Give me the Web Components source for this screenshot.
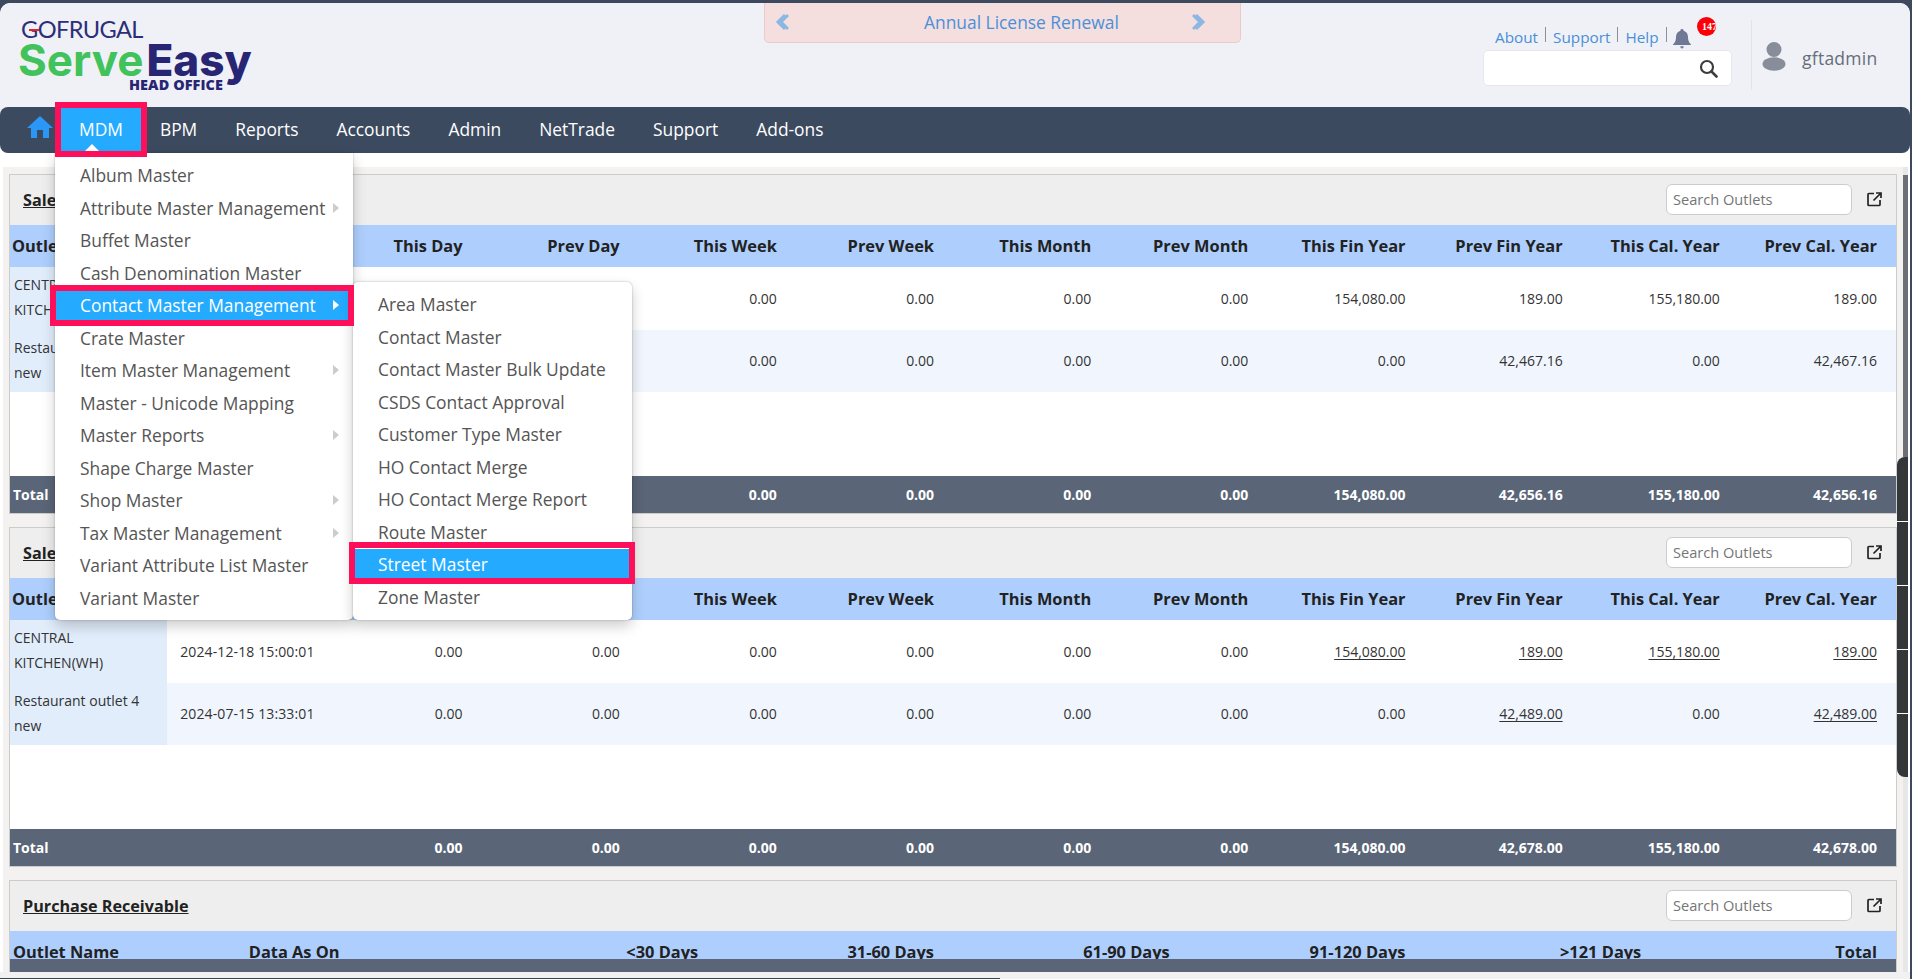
<!DOCTYPE html>
<html>
<head>
<meta charset="utf-8">
<title>ServeEasy Head Office</title>
<style>
  html, body { margin: 0; height: 100%; overflow: hidden; }
  body { background: #3d4a5e; font-family: "Open Sans", "Liberation Sans", sans-serif; }
</style>
</head>
<body>
<app-shell></app-shell>

<script>
const DASHBOARD = {
  sales1: {
    cols: 12,
    head: ["Outlet Name", "Data As On", "This Day", "Prev Day", "This Week", "Prev Week", "This Month", "Prev Month", "This Fin Year", "Prev Fin Year", "This Cal. Year", "Prev Cal. Year"],
    rows: [
      ["CENTRAL KITCHEN(WH)", "", "0.00", "0.00", "0.00", "0.00", "0.00", "0.00", "154,080.00", "189.00", "155,180.00", "189.00"],
      ["Restaurant outlet 4 new", "", "0.00", "0.00", "0.00", "0.00", "0.00", "0.00", "0.00", "42,467.16", "0.00", "42,467.16"]
    ],
    total: ["Total", "", "0.00", "0.00", "0.00", "0.00", "0.00", "0.00", "154,080.00", "42,656.16", "155,180.00", "42,656.16"]
  },
  sales2: {
    cols: 12,
    links: true,
    head: ["Outlet Name", "Data As On", "This Day", "Prev Day", "This Week", "Prev Week", "This Month", "Prev Month", "This Fin Year", "Prev Fin Year", "This Cal. Year", "Prev Cal. Year"],
    rows: [
      ["CENTRAL KITCHEN(WH)", "2024-12-18 15:00:01", "0.00", "0.00", "0.00", "0.00", "0.00", "0.00", "154,080.00", "189.00", "155,180.00", "189.00"],
      ["Restaurant outlet 4 new", "2024-07-15 13:33:01", "0.00", "0.00", "0.00", "0.00", "0.00", "0.00", "0.00", "42,489.00", "0.00", "42,489.00"]
    ],
    total: ["Total", "", "0.00", "0.00", "0.00", "0.00", "0.00", "0.00", "154,080.00", "42,678.00", "155,180.00", "42,678.00"]
  },
  receivable: {
    cols: 8,
    clipped: true,
    head: ["Outlet Name", "Data As On", "<30 Days", "31-60 Days", "61-90 Days", "91-120 Days", ">121 Days", "Total"],
    rows: [],
    total: ["Total", "", "0.00", "0.00", "0.00", "0.00", "0.00", "0.00"]
  }
};

const MDM_ITEMS = [
  ["Album Master"], ["Attribute Master Management", 1], ["Buffet Master"], ["Cash Denomination Master"],
  ["Contact Master Management", 1, 1], ["Crate Master"], ["Item Master Management", 1], ["Master - Unicode Mapping"],
  ["Master Reports", 1], ["Shape Charge Master"], ["Shop Master", 1], ["Tax Master Management", 1],
  ["Variant Attribute List Master"], ["Variant Master"]
];
const CONTACT_ITEMS = [
  ["Area Master"], ["Contact Master"], ["Contact Master Bulk Update"], ["CSDS Contact Approval"],
  ["Customer Type Master"], ["HO Contact Merge"], ["HO Contact Merge Report"], ["Route Master"],
  ["Street Master", 0, 1], ["Zone Master"]
];

class BrandLogo extends HTMLElement {
  constructor() {
    super();
    this.attachShadow({mode: "open"}).innerHTML = `
      <style>
        :host { display: block; width: 260px; color: #272574; }
        .go { font: 400 23.6px/20px Lato, sans-serif; letter-spacing: -.6px; color: #2c2f78; padding-left: 3px; position: relative; }
        .go i { position: absolute; left: 11px; top: 10px; width: 10px; height: 2px; background: #e8202c; }
        .name { display: flex; font: 800 44px/50px Inter, "Open Sans", sans-serif; margin-top: -4px; }
        .serve { color: #42c25a; font-weight: 700; }
        .easy { color: #272574; margin-left: 3px; }
        .ho { font: 800 14.4px/14px "Open Sans", sans-serif; letter-spacing: .1px; margin: -7px 0 0 111px; }
      </style>
      <div class="go"><i></i>GOFRUGAL</div>
      <div class="name"><span class="serve">Serve</span><span class="easy">Easy</span></div>
      <div class="ho">HEAD OFFICE</div>`;
  }
}

class AppHeader extends HTMLElement {
  constructor() {
    super();
    this.attachShadow({mode: "open"}).innerHTML = `
      <style>
        :host { display: grid; grid-template-columns: 746px 477px 1fr; height: 104px; box-sizing: border-box;
                padding: 0 0 0 18px; background: #f0f1f7; border-radius: 10px 10px 0 0; }
        brand-logo { margin-top: 16px; }
        .banner { height: 40px; box-sizing: border-box; background: #f4dede; border: 1px solid #eccaca; border-top: 0;
                  border-radius: 0 0 5px 5px; display: flex; align-items: center;
                  padding: 0 0 2px 10px; color: #4a90d9; font-size: 17.4px; white-space: nowrap; }
        .banner span { margin: 0 73px 0 135px; }
        .right { display: flex; justify-content: flex-end; padding: 14px 0 0; }
        .tools { display: flex; flex-direction: column; align-items: flex-start; width: 249px; }
        .links { height: 33px; box-sizing: border-box; padding: 0 0 3px 12px; display: flex; align-items: flex-end; font-size: 15.3px; color: #4a8fd6; position: relative; line-height: 20px; }
        .links i { display: block; width: 1px; height: 15px; background: #8a8f99; margin: 0 7px 5px; }
        .links svg { margin: 0 0 -2px -1px; }
        .badge { position: absolute; left: 214px; top: 0; width: 19px; height: 19px; border-radius: 50%; background: #fb0007; color: #fff;
                 font: 700 10px/19px "Liberation Serif", serif; overflow: hidden; white-space: nowrap; padding-left: 5px; box-sizing: border-box; }
        .search { box-sizing: border-box; width: 249px; height: 36px; background: #fff; border: 1px solid #e6e7ee; border-radius: 5px;
                  display: flex; align-items: center; justify-content: flex-end; padding-right: 13px; }
        .user { display: flex; align-items: flex-start; margin-left: 19px; width: 158px; height: 70px; border-left: 1px solid #e3e4ea; margin-top: 3px; }
        .user svg { margin: 22px 0 0 10px; }
        .user span { font-size: 17.5px; color: #666d7a; margin: 26px 0 0 16px; line-height: 24px; letter-spacing: .25px; }
      </style>
      <brand-logo></brand-logo>
      <div class="banner">
        <svg width="14" height="18" viewBox="0 0 14 18"><path d="M10 2 3 9l7 7M13 2 6 9l7 7" fill="none" stroke="#8ab7e3" stroke-width="3"/></svg>
        <span>Annual License Renewal</span>
        <svg width="14" height="18" viewBox="0 0 14 18"><path d="M1 2l7 7-7 7M4 2l7 7-7 7" fill="none" stroke="#8ab7e3" stroke-width="3"/></svg>
      </div>
      <div class="right">
        <div class="tools">
          <div class="links">
            <span>About</span><i></i><span>Support</span><i></i><span>Help</span><i></i>
            <svg width="18" height="20" viewBox="0 0 18 20"><path d="M9 0c1 0 1.600.7 1.600 1.700C13.500 2.500 15 5 15 8c0 3 .6 5 3 7.500V16H0v-.5C2.400 13 3 11 3 8c0-3 1.500-5.500 4.400-6.300C7.400.7 8 0 9 0zM7.300 17.200h3.400C10.500 18.500 10 19.500 9 19.500s-1.500-1-1.700-2.300z" fill="#6f7894"/></svg>
            <span class="badge">147</span>
          </div>
          <div class="search">
            <svg width="19" height="19" viewBox="0 0 19 19"><circle cx="8" cy="8" r="6" fill="none" stroke="#3d3d3d" stroke-width="2.200"/><path d="M12.500 12.500l5 5" stroke="#3d3d3d" stroke-width="2.600" stroke-linecap="round"/></svg>
          </div>
        </div>
        <div class="user">
          <svg width="24" height="29" viewBox="0 0 24 29"><circle cx="12" cy="7.500" r="7.500" fill="#878d99"/><ellipse cx="12" cy="22" rx="11.500" ry="6.700" fill="#878d99"/></svg>
          <span>gftadmin</span>
        </div>
      </div>`;
  }
}

class NavBar extends HTMLElement {
  constructor() {
    super();
    const items = ["BPM", "Reports", "Accounts", "Admin", "NetTrade", "Support", "Add-ons"];
    this.attachShadow({mode: "open"}).innerHTML = `
      <style>
        :host { display: flex; height: 46px; background: #3c4a5f; border-radius: 8px; color: #fff; font-size: 17.4px; padding-left: 27px; box-sizing: border-box; }
        .home { width: 34px; padding-top: 9px; box-sizing: border-box; }
        a { display: flex; align-items: center; padding: 0 19px 2px; height: 46px; box-sizing: border-box; }
        a.on { background: #24abff; position: relative; padding: 0 18px 1px; height: 43px; margin-top: 1px; }
        a.on::after { content: ""; position: absolute; left: 24px; bottom: 0; border: 7px solid transparent; border-top: 0; border-bottom-color: #fff; }
      </style>
      <div class="home"><svg width="26" height="22" viewBox="0 0 26 22"><path d="M13 0l13 12h-4v10h-6v-8h-6v8H4V12H0z" fill="#2a97f7"/></svg></div>
      <a class="on">MDM</a>
      ${items.map(t => `<a>${t}</a>`).join("")}`;
  }
}

class FlyMenu extends HTMLElement {
  set items(list) {
    this.shadowRoot.querySelector(".list").innerHTML = list.map(([t, sub, on]) =>
      `<div class="item${on ? " on" : ""}"><span>${t}</span>${sub ? `<b></b>` : ""}</div>`).join("");
  }
  constructor() {
    super();
    this.attachShadow({mode: "open"}).innerHTML = `
      <style>
        :host { display: block; position: absolute; box-sizing: border-box; background: #fff; border-radius: 0 0 5px 5px; padding: 7px 0 5px;
                box-shadow: 0 6px 14px rgba(0,0,0,.2), 0 0 2px rgba(0,0,0,.3); font-size: 17.4px; color: #555; z-index: 5; }
        .item { height: 32.5px; display: flex; align-items: center; justify-content: space-between; padding: 0 14px 2px 25px; box-sizing: border-box; white-space: nowrap; }
        .item.on { background: #24abff; color: #fff; }
        b { border: 5px solid transparent; border-left: 6px solid #ccc; border-right: 0; }
        .on b { border-left-color: #fff; }
      </style>
      <div class="list"></div>`;
  }
}

class HlBox extends HTMLElement {
  constructor() {
    super();
    this.attachShadow({mode: "open"}).innerHTML = `
      <style>:host { display: block; position: absolute; box-sizing: border-box; border: 6px solid #fe0f5a; z-index: 9; pointer-events: none; }</style>`;
  }
}

class DataPanel extends HTMLElement {
  constructor() {
    super();
    this.attachShadow({mode: "open"});
  }
  connectedCallback() {
    const d = DASHBOARD[this.getAttribute("data-key")];
    const esc = s => s.replace(/</g, "&lt;").replace(/>/g, "&gt;");
    const cells = (row, cls) => row.map((t, i) => `<div class="c ${i < 2 ? "l" : "r"} ${cls || ""}">${esc(t)}</div>`).join("");
    const body = d.rows.map((row, n) => `<div class="row${n % 2 ? " alt" : ""}">` + row.map((t, i) => {
      if (i == 0) return `<div class="c first">${t}</div>`;
      if (i == 1) return `<div class="c date">${t}</div>`;
      const link = d.links && i > 7 && t != "0.00";
      return `<div class="c r">${link ? `<u>${t}</u>` : t}</div>`;
    }).join("") + `</div>`).join("");
    this.shadowRoot.innerHTML = `
      <style>
        :host { display: block; box-sizing: border-box; border: 1px solid #ccc; background: #fff; flex: none; }
        .head { height: 50px; box-sizing: border-box; background: #eee; display: flex; align-items: center; justify-content: space-between; padding: 0 14px 0 13px; }
        .title { font-size: 16.2px; font-weight: 700; color: #222; text-decoration: underline; }
        .tools { display: flex; align-items: center; gap: 15px; padding-bottom: 1px; }
        .find { width: 186px; height: 31px; box-sizing: border-box; background: #fff; border: 1px solid #ccc; border-radius: 6px; font-size: 14.6px; color: #757575; line-height: 29px; padding-left: 6px; }
        .row { display: grid; grid-template-columns: repeat(${d.cols}, 1fr); }
        .thead { background: #aecffd; height: 42px; box-sizing: border-box; padding-bottom: 2px; font-size: 16.4px; font-weight: 700; color: #222; align-items: center; }
        .body { height: ${d.clipped ? 28 : 251}px; overflow: hidden; }
        .tbody .row { height: 62.5px; font-size: 14px; color: #333; align-items: center; }
        .tbody .alt { background: #f1f6fe; }
        .c.r { text-align: right; padding-right: 19px; }
        .c.l { padding-left: ${d.cols == 8 ? 3 : 2}px; white-space: nowrap; }
        .c.first { background: #e1edfb; align-self: stretch; padding: 5px 8px 0 4px; line-height: 25px; box-sizing: border-box; }
        .c.date { padding-left: 13px; letter-spacing: .12px; white-space: nowrap; }
        u { text-underline-offset: 2px; }
        .total { background: #5a6577; height: 37px; box-sizing: border-box; padding-bottom: 1px; color: #fff; font-size: 14px; font-weight: 700; align-items: center; }
        .total .c.l { padding-left: 3px; }
      </style>
      <div class="head">
        <span class="title"><slot></slot></span>
        <div class="tools">
          <div class="find">Search Outlets</div>
          <svg width="15" height="15" viewBox="0 0 15 15"><path d="M7 1.500H2A1 1 0 0 0 1 2.500v10a1 1 0 0 0 1 1h10a1 1 0 0 0 1-1V8M9 1h5v5M14 1L6.500 8.500" fill="none" stroke="#222" stroke-width="1.700"/></svg>
        </div>
      </div>
      <div class="body">
        <div class="row thead">${cells(d.head)}</div>
        ${d.clipped ? "" : `<div class="tbody">${body}</div>`}
      </div>
      <div class="row total">${cells(d.total)}</div>`;
  }
}

class SideScroll extends HTMLElement {
  constructor() {
    super();
    this.attachShadow({mode: "open"}).innerHTML = `
      <style>
        :host { display: block; position: relative; width: 5px; background: #e7e7ea; }
        .thin { position: absolute; left: 0; right: 0; top: 8px; height: 282px; background: #6c6f73; }
        .fat { position: absolute; right: 0; width: 11px; top: 290px; height: 320px; background: #33373a; border-radius: 8px 0 0 8px; overflow: hidden; z-index: 4; }
        .fat i { display: block; height: 1px; background: #fff; margin-top: 63px; }
        .fat i:first-child { margin-top: 64px; }
      </style>
      <div class="thin"></div>
      <div class="fat"><i></i><i></i><i></i><i></i></div>`;
  }
}

class AppShell extends HTMLElement {
  constructor() {
    super();
    this.attachShadow({mode: "open"}).innerHTML = `
      <style>
        :host { display: block; box-sizing: border-box; height: 979px; padding: 3px 2px 0 0; position: relative; overflow: hidden; }
        .frame { height: 976px; display: flex; flex-direction: column; background: #fff; border-radius: 10px 10px 0 0; overflow: hidden; }
        .bar-wrap { background: linear-gradient(#f0f1f7 50%, #fff 50%); }
        .work { flex: 1; min-height: 0; display: flex; padding: 14px 2px 0 3px; }
        main { flex: 1; min-width: 0; background: #f3f2f1; padding: 7px 6px 0; display: flex; flex-direction: column; gap: 13px; overflow: hidden; }
        .hscroll { height: 7px; box-sizing: border-box; background: #f1f1f1; }
        .hscroll div { height: 5.500px; border-bottom: 1.500px solid #3d4448; width: 1000px; }
        fly-menu.a { left: 55px; top: 153px; width: 298px; height: 467px; }
        fly-menu.b { left: 353px; top: 282px; width: 279px; height: 338px; border-radius: 5px; }
      </style>
      <div class="frame">
        <app-header></app-header>
        <div class="bar-wrap"><nav-bar></nav-bar></div>
        <div class="work">
          <main>
            <data-panel data-key="sales1">Sales</data-panel>
            <data-panel data-key="sales2">Sales</data-panel>
            <data-panel data-key="receivable">Purchase Receivable</data-panel>
          </main>
          <side-scroll></side-scroll>
        </div>
        <div class="hscroll"><div></div></div>
      </div>
      <fly-menu class="a"></fly-menu>
      <fly-menu class="b"></fly-menu>
      <hl-box style="left:55px;top:102px;width:92px;height:55px"></hl-box>
      <hl-box style="left:50px;top:285px;width:304px;height:41px"></hl-box>
      <hl-box style="left:349px;top:542px;width:286px;height:42px"></hl-box>`;
  }
  connectedCallback() {
    this.shadowRoot.querySelector("fly-menu.a").items = MDM_ITEMS;
    this.shadowRoot.querySelector("fly-menu.b").items = CONTACT_ITEMS;
  }
}

customElements.define("brand-logo", BrandLogo);
customElements.define("app-header", AppHeader);
customElements.define("nav-bar", NavBar);
customElements.define("fly-menu", FlyMenu);
customElements.define("hl-box", HlBox);
customElements.define("data-panel", DataPanel);
customElements.define("side-scroll", SideScroll);
customElements.define("app-shell", AppShell);
</script>
</body>
</html>
